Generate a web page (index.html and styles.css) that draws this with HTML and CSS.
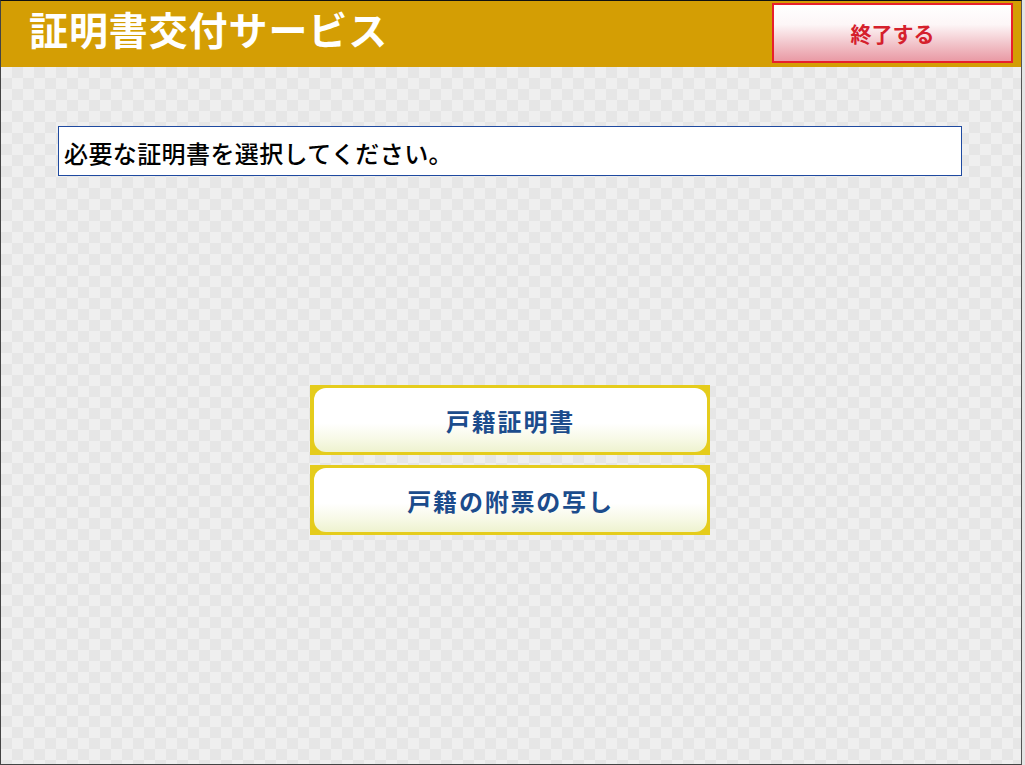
FILE: index.html
```html
<!DOCTYPE html>
<html lang="ja">
<head>
<meta charset="utf-8">
<title>証明書交付サービス</title>
<link rel="stylesheet" href="styles.css">
</head>
<body>
<div class="screen">
  <header class="header">
    <h1 class="title">証明書交付サービス</h1>
    <button class="exit-btn">終了する</button>
  </header>
  <main class="main">
    <div class="message">必要な証明書を選択してください。</div>
    <div class="choices">
      <button class="choice"><span class="choice-inner">戸籍証明書</span></button>
      <button class="choice"><span class="choice-inner">戸籍の附票の写し</span></button>
    </div>
  </main>
</div>
</body>
</html>
```

FILE: styles.css
```css
html, body {
  margin: 0;
  padding: 0;
}
body {
  background: #e4e4e4;
  width: 1025px;
  height: 765px;
  overflow: hidden;
  font-family: "Noto Sans CJK JP", "Noto Sans", sans-serif;
}
.screen {
  box-sizing: border-box;
  width: 1022px;
  height: 765px;
  border-top: 1px solid #111;
  border-left: 1px solid #444;
  border-right: 1px solid #555;
  border-bottom: 1px solid #444;
  display: flex;
  flex-direction: column;
  background-color: #ebebeb;
  background-image: repeating-conic-gradient(#e6e6e6 0 25%, #efefef 0 50%);
  background-size: 22px 22px;
}
.header {
  height: 66px;
  flex: none;
  background: #d49e04;
  display: flex;
  justify-content: space-between;
  align-items: flex-start;
}
.title {
  margin: 0;
  padding-left: 28px;
  color: #fff;
  font-size: 39px;
  font-weight: 700;
  line-height: 54px;
  letter-spacing: 0.9px;
}
.exit-btn {
  margin: 2px 8px 0 0;
  width: 241px;
  height: 60px;
  box-sizing: border-box;
  border: 2px solid #e8202c;
  background: linear-gradient(#ffffff 0%, #fdf6f7 35%, #f0bcc3 75%, #e99aa5 100%);
  color: #d5202c;
  font-family: inherit;
  font-size: 21px;
  font-weight: 700;
  padding: 0;
  cursor: pointer;
}
.main {
  flex: 1;
  display: flex;
  flex-direction: column;
  padding: 59px 0 0 57px;
}
.message {
  box-sizing: border-box;
  width: 904px;
  height: 50px;
  border: 1px solid #1f4aa0;
  background: #fff;
  color: #000;
  font-size: 24px;
  font-weight: 500;
  line-height: 51px;
  letter-spacing: 0.4px;
  padding-left: 5px;
}
.choices {
  display: flex;
  flex-direction: column;
  gap: 10px;
  margin: 209px 0 0 252px;
  width: 400px;
}
.choice {
  box-sizing: border-box;
  width: 400px;
  height: 70px;
  padding: 3px 3px 3px 4px;
  border: 0;
  background: #e5cc1c;
  display: flex;
  cursor: pointer;
}
.choice-inner {
  flex: 1;
  border-radius: 12px;
  background: linear-gradient(#ffffff 0%, #ffffff 55%, #f7f9e6 80%, #eef3cf 100%);
  display: flex;
  align-items: center;
  justify-content: center;
  color: #1c4c8c;
  font-family: "Noto Sans CJK JP", sans-serif;
  font-size: 24px;
  font-weight: 700;
  letter-spacing: 1.8px;
}
```
